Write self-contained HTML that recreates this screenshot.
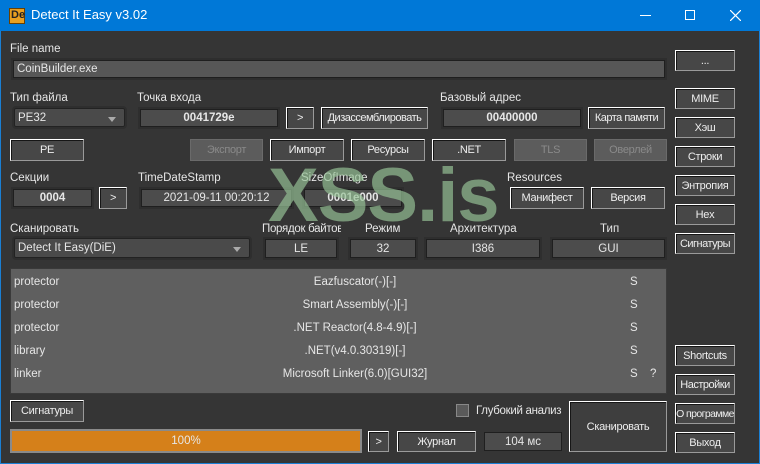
<!DOCTYPE html>
<html><head><meta charset="utf-8"><style>
*{box-sizing:border-box;margin:0;padding:0}
body{width:760px;height:464px;overflow:hidden;background:#353535;font-family:"Liberation Sans","DejaVu Sans",sans-serif;font-size:11.5px;color:#e6e6e6;position:relative}
.a{position:absolute}
.tb{left:0;top:0;width:760px;height:31px;background:#0078d7;color:#fff}
.win{left:0;top:31px;width:760px;height:433px;border:1px solid #1a7fd4;border-top:none}
.l{position:absolute;white-space:nowrap;line-height:14px}
.b{position:absolute;background:#474747;border:1px solid;border-color:#fff #9a9a9a #9a9a9a #fff;box-shadow:inset 1px 1px 0 #161616;display:flex;align-items:center;justify-content:center;white-space:nowrap;color:#eee;letter-spacing:-0.3px;font-size:11px}
.d{background:#5c5c5c;border-color:#6a6a6a;box-shadow:none;color:#8a8a8a}
.f{position:absolute;background:#4c4c4c;border:1px solid #1f1f1f;display:flex;align-items:center;justify-content:center;white-space:nowrap;outline:2px solid #2e2e2e}
.bold{font-weight:bold}
.cb{position:absolute;background:#4a4a4a;border:1px solid #222;border-radius:2px;outline:2px solid #2e2e2e;padding-left:3px;display:flex;align-items:center}
.cb:after{content:"";position:absolute;right:8px;top:8px;border:4px solid transparent;border-top:5px solid #aaa;border-bottom:none}
</style></head><body>
<div class="a tb">
<div class="a" style="left:9px;top:8px;width:16px;height:16px;background:#e8a020;border:1px solid #6a4000"><span style="position:absolute;left:1px;top:0;font:bold 11px 'Liberation Sans';color:#222">De</span></div>
<div class="l" style="left:31px;top:8px;font-size:13px">Detect It Easy v3.02</div>
<div class="a" style="left:640px;top:15px;width:11px;height:1px;background:#fff"></div>
<div class="a" style="left:685px;top:10px;width:10px;height:10px;border:1px solid #fff"></div>
<svg class="a" style="left:730px;top:10px" width="11" height="11"><path d="M0 0L11 11M11 0L0 11" stroke="#fff" stroke-width="1.2"/></svg>
</div>
<div class="a win"></div>

<div class="l" style="left:10px;top:42px">File name</div>
<div class="f" style="left:13px;top:60px;width:652px;height:18px;justify-content:flex-start;padding-left:3px;background:#575757">CoinBuilder.exe</div>
<div class="b" style="left:675px;top:50px;width:60px;height:21px">...</div>

<div class="l" style="left:10px;top:91px">Тип файла</div>
<div class="cb" style="left:14px;top:108px;width:111px;height:19px">PE32</div>
<div class="l" style="left:137px;top:91px">Точка входа</div>
<div class="f bold" style="left:140px;top:109px;width:138px;height:18px">0041729e</div>
<div class="b" style="left:286px;top:107px;width:28px;height:22px">&gt;</div>
<div class="b" style="left:321px;top:107px;width:107px;height:22px;letter-spacing:-0.5px">Дизассемблировать</div>
<div class="l" style="left:440px;top:91px">Базовый адрес</div>
<div class="f bold" style="left:443px;top:109px;width:138px;height:18px">00400000</div>
<div class="b" style="left:588px;top:107px;width:77px;height:22px;letter-spacing:-0.5px">Карта памяти</div>

<div class="b" style="left:675px;top:88px;width:60px;height:21px">MIME</div>
<div class="b" style="left:675px;top:117px;width:60px;height:21px">Хэш</div>
<div class="b" style="left:675px;top:146px;width:60px;height:21px">Строки</div>
<div class="b" style="left:675px;top:175px;width:60px;height:21px">Энтропия</div>
<div class="b" style="left:675px;top:204px;width:60px;height:21px">Hex</div>
<div class="b" style="left:675px;top:233px;width:60px;height:21px;letter-spacing:-0.5px">Сигнатуры</div>

<div class="b" style="left:10px;top:139px;width:74px;height:22px">PE</div>
<div class="b d" style="left:190px;top:139px;width:73px;height:22px">Экспорт</div>
<div class="b" style="left:270px;top:139px;width:74px;height:22px">Импорт</div>
<div class="b" style="left:351px;top:139px;width:74px;height:22px">Ресурсы</div>
<div class="b" style="left:432px;top:139px;width:74px;height:22px">.NET</div>
<div class="b d" style="left:514px;top:139px;width:73px;height:22px">TLS</div>
<div class="b d" style="left:594px;top:139px;width:73px;height:22px">Оверлей</div>

<div class="l" style="left:10px;top:171px">Секции</div>
<div class="f bold" style="left:13px;top:189px;width:79px;height:18px">0004</div>
<div class="b" style="left:99px;top:187px;width:28px;height:22px">&gt;</div>
<div class="l" style="left:138px;top:171px">TimeDateStamp</div>
<div class="f" style="left:141px;top:189px;width:151px;height:18px">2021-09-11 00:20:12</div>
<div class="l" style="left:301px;top:171px">SizeOfImage</div>
<div class="f bold" style="left:304px;top:189px;width:98px;height:18px">0001e000</div>
<div class="l" style="left:507px;top:171px">Resources</div>
<div class="b" style="left:510px;top:187px;width:74px;height:22px">Манифест</div>
<div class="b" style="left:591px;top:187px;width:74px;height:22px">Версия</div>

<div class="l" style="left:10px;top:222px">Сканировать</div>
<div class="cb" style="left:14px;top:238px;width:236px;height:20px">Detect It Easy(DiE)</div>
<div class="l" style="left:262px;top:222px;width:79px;overflow:hidden;letter-spacing:-0.3px">Порядок байтов</div>
<div class="f" style="left:265px;top:239px;width:72px;height:19px">LE</div>
<div class="l" style="left:365px;top:222px">Режим</div>
<div class="f" style="left:350px;top:239px;width:66px;height:19px">32</div>
<div class="l" style="left:450px;top:222px">Архитектура</div>
<div class="f" style="left:426px;top:239px;width:114px;height:19px">I386</div>
<div class="l" style="left:600px;top:222px">Тип</div>
<div class="f" style="left:552px;top:239px;width:113px;height:19px">GUI</div>

<div class="a" style="left:10px;top:268px;width:657px;height:126px;background:#5f5f5f;border:1px solid #3a3a3a"></div>
<div class="l" style="left:14px;top:275px">protector</div><div class="l" style="left:200px;width:310px;text-align:center;top:275px">Eazfuscator(-)[-]</div><div class="l" style="left:630px;top:275px">S</div>
<div class="l" style="left:14px;top:298px">protector</div><div class="l" style="left:200px;width:310px;text-align:center;top:298px">Smart Assembly(-)[-]</div><div class="l" style="left:630px;top:298px">S</div>
<div class="l" style="left:14px;top:321px">protector</div><div class="l" style="left:200px;width:310px;text-align:center;top:321px">.NET Reactor(4.8-4.9)[-]</div><div class="l" style="left:630px;top:321px">S</div>
<div class="l" style="left:14px;top:344px">library</div><div class="l" style="left:200px;width:310px;text-align:center;top:344px">.NET(v4.0.30319)[-]</div><div class="l" style="left:630px;top:344px">S</div>
<div class="l" style="left:14px;top:367px">linker</div><div class="l" style="left:200px;width:310px;text-align:center;top:367px">Microsoft Linker(6.0)[GUI32]</div><div class="l" style="left:630px;top:367px">S</div><div class="l" style="left:650px;top:367px">?</div>

<div class="b" style="left:675px;top:345px;width:60px;height:21px">Shortcuts</div>
<div class="b" style="left:675px;top:374px;width:60px;height:21px;letter-spacing:-0.5px">Настройки</div>
<div class="b" style="left:675px;top:403px;width:60px;height:21px;font-size:10.5px;letter-spacing:-0.6px">О программе</div>
<div class="b" style="left:675px;top:432px;width:60px;height:21px">Выход</div>

<div class="b" style="left:10px;top:400px;width:74px;height:22px">Сигнатуры</div>
<div class="a" style="left:456px;top:404px;width:13px;height:13px;background:#5a5a5a;border:1px solid #888"></div>
<div class="l" style="left:476px;top:404px;letter-spacing:-0.3px">Глубокий анализ</div>
<div class="b" style="left:569px;top:401px;width:98px;height:51px;background:#3e3e3e">Сканировать</div>
<div class="a" style="left:10px;top:429px;width:352px;height:24px;background:#d5801a;border:2px solid #8a8a8a;display:flex;align-items:center;justify-content:center">100%</div>
<div class="b" style="left:368px;top:431px;width:21px;height:21px">&gt;</div>
<div class="b" style="left:397px;top:431px;width:79px;height:21px">Журнал</div>
<div class="f" style="left:484px;top:432px;width:78px;height:19px;outline:none">104 мс</div>

<div class="l" style="left:268px;top:158px;font:bold 76px/76px 'Liberation Sans',sans-serif;color:rgba(150,195,150,0.68);letter-spacing:-1px">XSS.is</div>
</body></html>
